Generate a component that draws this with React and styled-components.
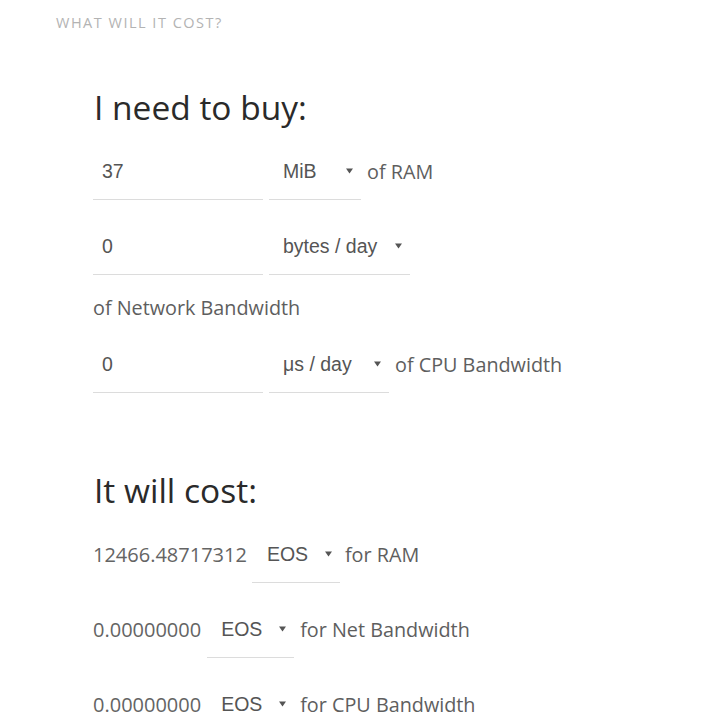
import React from "react";
import styled, { createGlobalStyle } from "styled-components";

const GlobalStyle = createGlobalStyle`
  html, body {
    margin: 0;
    padding: 0;
    background: #fff;
  }
  body {
    font-family: "Open Sans", "Liberation Sans", sans-serif;
  }
`;

const Page = styled.div`
  padding: 13px 0 0 56px;
`;

const Eyebrow = styled.div`
  font-size: 14.5px;
  line-height: 20px;
  letter-spacing: 1.5px;
  text-transform: uppercase;
  color: #b3b3b3;
`;

const Main = styled.div`
  width: 500px;
  margin-left: 37px;
`;

const Section = styled.section`
  margin-top: ${(p) => p.$top}px;
`;

const Heading = styled.h2`
  margin: 0 0 16px 1px;
  font-size: 33.5px;
  line-height: 42px;
  font-weight: 400;
  color: #2a2a2a;
`;

const Stack = styled.div`
  display: flex;
  flex-direction: column;
  gap: 19px;
`;

const Line = styled.div`
  display: flex;
  flex-wrap: wrap;
  align-items: center;
  column-gap: ${(p) => p.$gap || 6}px;
  row-gap: 23px;
`;

const Label = styled.span`
  font-size: 19.8px;
  line-height: 20px;
  color: #5e5e5e;
  white-space: nowrap;
`;

const Amount = styled(Label)`
  font-size: 20px;
  color: #646464;
`;

const Input = styled.input`
  box-sizing: border-box;
  width: 170px;
  height: 56px;
  margin: 0;
  padding: 0 9px 1px;
  border: none;
  border-bottom: 1px solid #dcdcdc;
  border-radius: 0;
  outline: none;
  background: transparent;
  font-family: "Liberation Sans", Arial, sans-serif;
  font-size: 19.5px;
  color: #555;
`;

const SelectBox = styled.div`
  box-sizing: border-box;
  display: flex;
  align-items: center;
  width: ${(p) => p.$width}px;
  height: 56px;
  padding: 0 8px 1px ${(p) => p.$pad || 14}px;
  border-bottom: 1px solid #dcdcdc;
  font-family: "Liberation Sans", Arial, sans-serif;
  font-size: 19.5px;
  color: #555;
  cursor: pointer;
`;

const SelectText = styled.span`
  flex: 1;
  white-space: nowrap;
`;

const Caret = () => (
  <svg width="7" height="6" viewBox="0 0 7 6">
    <polygon points="0,0.5 7,0.5 3.5,5.5" fill="#555" />
  </svg>
);

const Select = ({ value, width, pad }) => (
  <SelectBox $width={width} $pad={pad}>
    <SelectText>{value}</SelectText>
    <Caret />
  </SelectBox>
);

export default function App() {
  return (
    <Page>
      <GlobalStyle />
      <Eyebrow>What will it cost?</Eyebrow>
      <Main>
        <Section $top={53}>
          <Heading>I need to buy:</Heading>
          <Stack>
            <Line>
              <Input defaultValue="37" />
              <Select value="MiB" width={92} />
              <Label>of RAM</Label>
            </Line>
            <Line>
              <Input defaultValue="0" />
              <Select value="bytes / day" width={141} />
              <Label>of Network Bandwidth</Label>
            </Line>
            <Line>
              <Input defaultValue="0" />
              <Select value="μs / day" width={120} />
              <Label>of CPU Bandwidth</Label>
            </Line>
          </Stack>
        </Section>
        <Section $top={76}>
          <Heading>It will cost:</Heading>
          <Stack>
            <Line $gap={5}>
              <Amount>12466.48717312</Amount>
              <Select value="EOS" width={88} pad={15} />
              <Label>for RAM</Label>
            </Line>
            <Line>
              <Amount>0.00000000</Amount>
              <Select value="EOS" width={87} />
              <Label>for Net Bandwidth</Label>
            </Line>
            <Line>
              <Amount>0.00000000</Amount>
              <Select value="EOS" width={87} />
              <Label>for CPU Bandwidth</Label>
            </Line>
          </Stack>
        </Section>
      </Main>
    </Page>
  );
}
